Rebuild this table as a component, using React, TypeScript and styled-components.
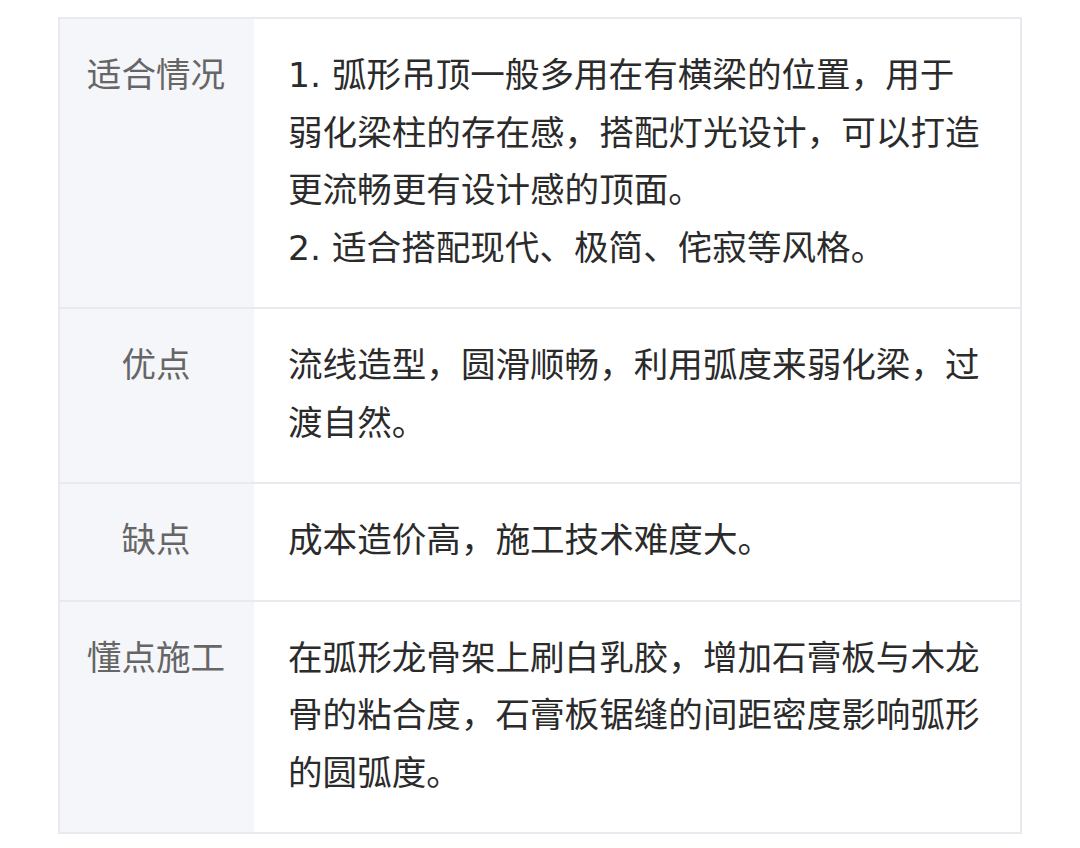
import styled, { createGlobalStyle } from 'styled-components';

const GlobalStyle = createGlobalStyle`
  html, body {
    margin: 0;
    padding: 0;
    background: #ffffff;
  }
`;

const rows = [
  {
    label: '适合情况',
    lines: [
      '1. 弧形吊顶一般多用在有横梁的位置，用于弱化梁柱的存在感，搭配灯光设计，可以打造更流畅更有设计感的顶面。',
      '2. 适合搭配现代、极简、侘寂等风格。',
    ],
  },
  {
    label: '优点',
    lines: ['流线造型，圆滑顺畅，利用弧度来弱化梁，过渡自然。'],
  },
  {
    label: '缺点',
    lines: ['成本造价高，施工技术难度大。'],
  },
  {
    label: '懂点施工',
    lines: ['在弧形龙骨架上刷白乳胶，增加石膏板与木龙骨的粘合度，石膏板锯缝的间距密度影响弧形的圆弧度。'],
  },
];

function App() {
  return (
    <StPage>
      <GlobalStyle />
      <StTable>
        <tbody>
          {rows.map((row) => (
            <StRow key={row.label}>
              <StLabel>{row.label}</StLabel>
              <StContent>
                {row.lines.map((line) => (
                  <StLine key={line}>{line}</StLine>
                ))}
              </StContent>
            </StRow>
          ))}
        </tbody>
      </StTable>
    </StPage>
  );
}

export default App;

const StPage = styled.div`
  padding: 17px 58px 0 58px;
  font-family: "DejaVu Sans", "Noto Sans CJK SC", sans-serif;
  font-size: 34.6px;
  line-height: 57.5px;
`;

const StTable = styled.table`
  width: 964px;
  border-collapse: collapse;
  border: 2px solid #e8eaf0;
`;

const StRow = styled.tr`
  border-bottom: 2px solid #e8eaf0;
`;

const StLabel = styled.td`
  width: 195px;
  box-sizing: border-box;
  padding: 28px 2px 30px 0;
  vertical-align: top;
  text-align: center;
  background-color: #f5f6fa;
  color: #666666;
`;

const StContent = styled.td`
  padding: 28px 38px 30px 34px;
  vertical-align: top;
  color: #2b2b2b;
  background-color: #ffffff;
`;

const StLine = styled.div``;
